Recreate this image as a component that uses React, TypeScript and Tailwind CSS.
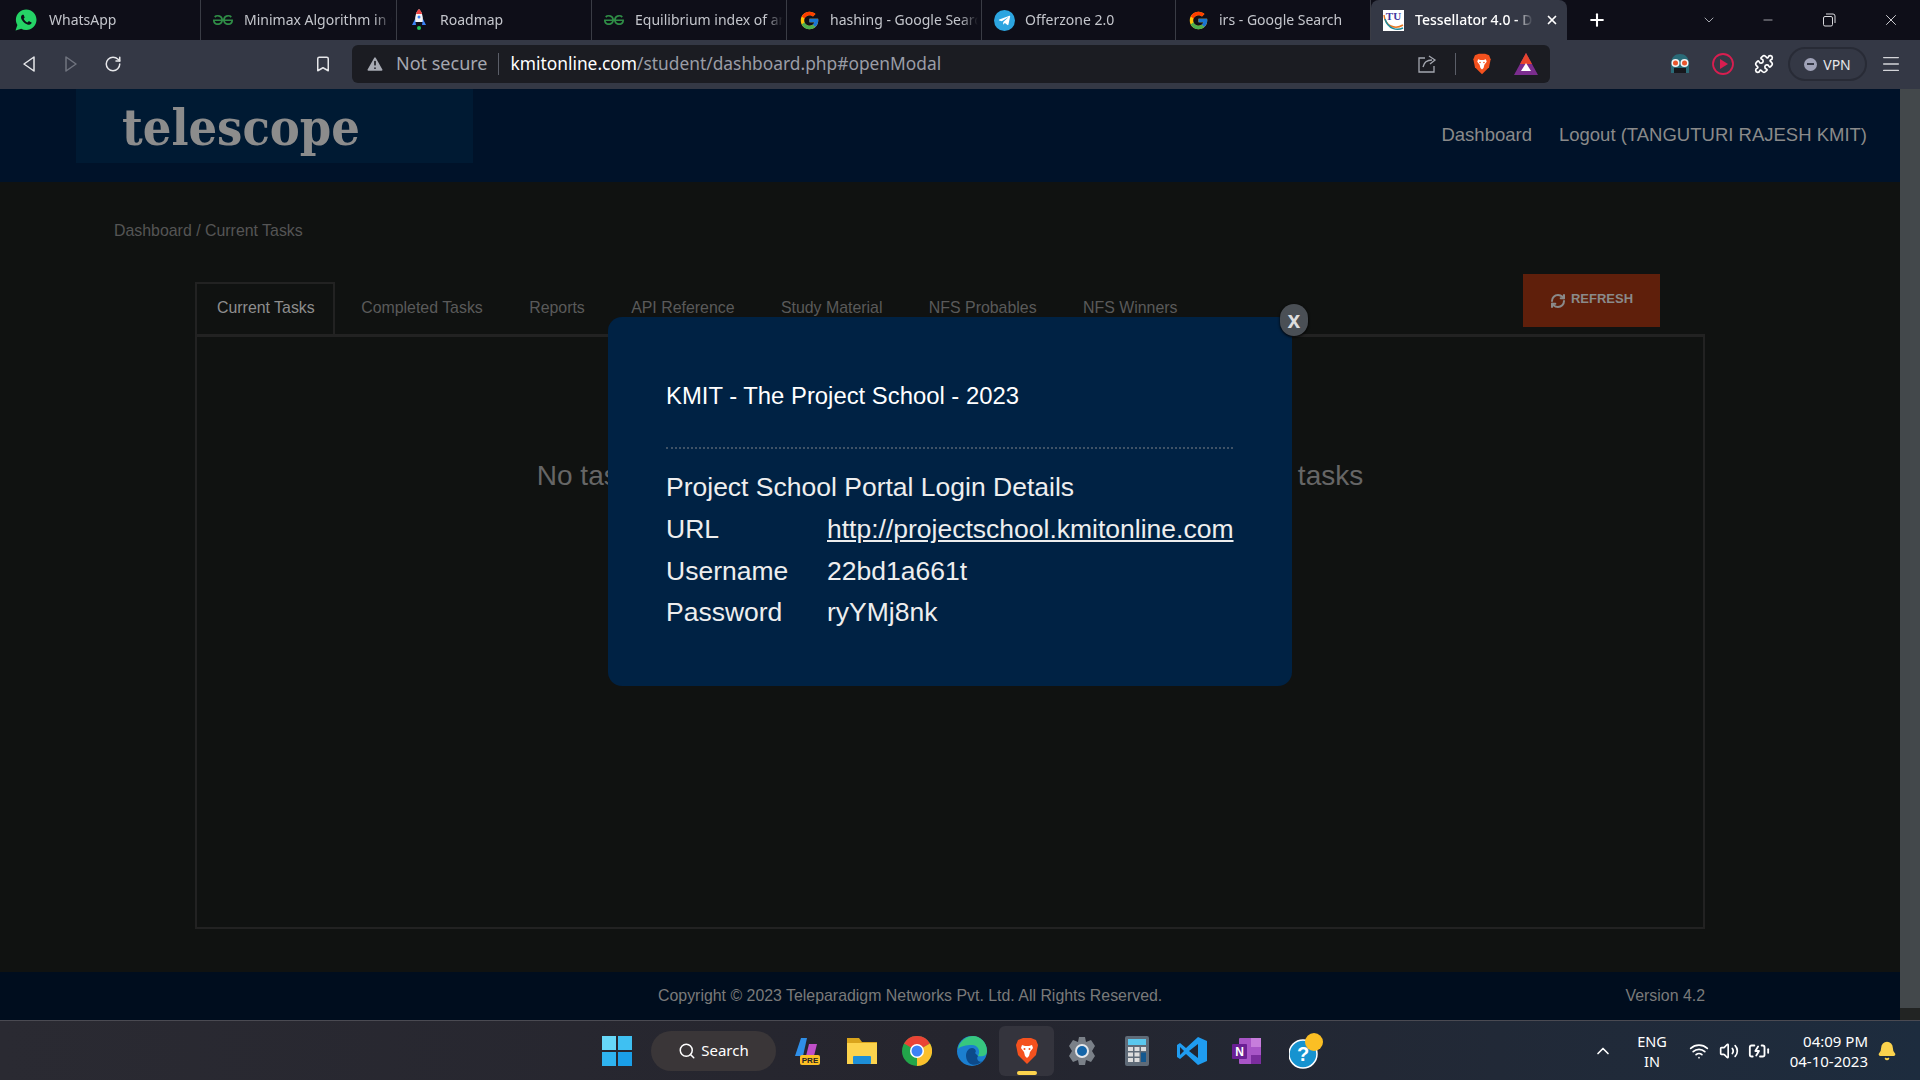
import React from "react";
import { FcGoogle } from "react-icons/fc";
import { IoLogoWhatsapp } from "react-icons/io";
import { FaTelegramPlane } from "react-icons/fa";
import { SiGeeksforgeeks } from "react-icons/si";
import {
  ChevronDown,
  ChevronUp,
  Minus,
  Plus,
  RefreshCw,
  RotateCw,
  Search,
  Volume2,
  Wifi,
  X,
  Bookmark,
  Puzzle,
  Menu,
  Bell,
  BatteryCharging,
  TriangleAlert,
} from "lucide-react";

const BraveIcon = ({ size = 24 }: { size?: number }) => (
  <svg width={size} height={size} viewBox="0 0 24 28">
    <path d="M3 3 L8 1 H16 L21 3 L23 8 L21 18 L12 27 L3 18 L1 8 Z" fill="#f4511e" />
    <path d="M7 8 L10 9 H14 L17 8 L18 11 L15 15 L14 19 L12 21 L10 19 L9 15 L6 11 Z" fill="#fff" />
    <circle cx="9.5" cy="12" r="1" fill="#f4511e" />
    <circle cx="14.5" cy="12" r="1" fill="#f4511e" />
  </svg>
);

const BatIcon = () => (
  <svg width="26" height="24" viewBox="0 0 26 24">
    <path d="M13 1 L25 23 H1 Z" fill="#7b2d8e" />
    <path d="M13 1 L19 12 H7 Z" fill="#e8452c" />
    <path d="M13 11 L18 19 H8 Z" fill="#fff" />
  </svg>
);

const RocketIcon = () => (
  <svg width="16" height="24" viewBox="0 0 16 24">
    <path d="M8 1 C11 4 12 8 12 14 H4 C4 8 5 4 8 1Z" fill="#f3f4f6" />
    <path d="M8 1 C9.5 2.5 10.5 4 11 6 H5 C5.5 4 6.500 2.500 8 1Z" fill="#ef4444" />
    <circle cx="8" cy="9" r="1.500" fill="#3b82f6" />
    <path d="M4 11 L1 17 H5Z M12 11 L15 17 H11Z" fill="#3b82f6" />
    <rect x="6" y="18" width="4" height="4" rx="2" fill="#22c55e" />
  </svg>
);

const TuIcon = () => (
  <div className="w-[21px] h-[21px] bg-white relative overflow-hidden flex items-start justify-center">
    <span className="text-[11px] leading-[13px] font-bold text-[#4338a0] font-['Liberation_Serif',serif]">TU</span>
    <svg className="absolute inset-0" width="21" height="21" viewBox="0 0 21 21" fill="none">
      <path d="M1 5 C2 16 12 20 20 15" stroke="#e87722" strokeWidth="1.500" />
      <path d="M2 9 C5 19 14 21 20 18" stroke="#1b8a9a" strokeWidth="1.500" />
    </svg>
  </div>
);

const GfgIcon = () => <SiGeeksforgeeks size={20} color="#2f8d46" />;

const tabs = [
  { title: "WhatsApp", icon: <IoLogoWhatsapp size={24} color="#25d366" className="-ml-[4px]" />, w: "w-[195px]" },
  { title: "Minimax Algorithm in Game Theory", icon: <GfgIcon />, w: "w-[196px]" },
  { title: "Roadmap", icon: <RocketIcon />, w: "w-[195px]" },
  { title: "Equilibrium index of an array", icon: <GfgIcon />, w: "w-[195px]" },
  { title: "hashing - Google Search", icon: <FcGoogle size={21} />, w: "w-[195px]" },
  {
    title: "Offerzone 2.0",
    icon: (
      <span className="w-[21px] h-[21px] rounded-full bg-[#2ca5e0] flex items-center justify-center">
        <FaTelegramPlane size={13} color="#fff" />
      </span>
    ),
    w: "w-[194px]",
  },
  { title: "irs - Google Search", icon: <FcGoogle size={21} />, w: "w-[195px]" },
];

const BrowserTabs = () => (
  <div className="h-10 bg-[#0e0e18] flex items-center pl-[6px] text-[14px] text-[#c4c6cc]">
    {tabs.map((tab) => (
      <div key={tab.title} className={`${tab.w} h-10 flex items-center relative border-r border-[#3a3c45]`}>
        <span className="w-[42px] pl-[2px] flex justify-center shrink-0">{tab.icon}</span>
        <span className="ml-[1px] mb-[2px] w-[148px] whitespace-nowrap overflow-hidden [mask-image:linear-gradient(to_right,#000_88%,transparent)]">
          {tab.title}
        </span>
      </div>
    ))}
    <div className="w-[196px] h-10 bg-[#343845] rounded-t-lg flex items-center pl-[12px] text-white shrink-0">
      <TuIcon />
      <span className="ml-[11px] mb-[2px] w-[118px] whitespace-nowrap overflow-hidden font-medium [mask-image:linear-gradient(to_right,#000_85%,transparent)]">
        Tessellator 4.0 - Dashboard
      </span>
      <X size={14} strokeWidth={3} className="ml-[12px]" />
    </div>
    <Plus size={20} strokeWidth={2.5} className="ml-[20px] text-white" />
    <ChevronDown size={16} strokeWidth={1.25} className="ml-[94px] text-[#c4c6cc]" />
    <Minus size={14} strokeWidth={1.25} className="ml-[44px] text-[#d8d8dc]" />
    <svg className="ml-[47px] text-[#d8d8dc]" width="14" height="14" viewBox="0 0 14 14" fill="none" stroke="currentColor">
      <rect x="1.500" y="3.500" width="9" height="9.500" rx="1.500" />
      <path d="M4 1 H11 A2 2 0 0 1 13 3 V10" />
    </svg>
    <X size={18} strokeWidth={1.25} className="ml-[46px] text-[#d8d8dc]" />
  </div>
);

const Toolbar = () => (
  <div className="h-[49px] pb-px bg-[#343845] flex items-center font-['Noto_Sans',sans-serif]">
    <div className="w-[352px] flex items-center shrink-0 text-[#e6e7ea]">
      <svg className="ml-[21px]" width="16" height="18" viewBox="0 0 16 18" fill="none" stroke="currentColor" strokeWidth="1.500">
        <path d="M13 2 L3 9 L13 16 Z" strokeLinejoin="round" />
      </svg>
      <svg className="ml-[26px] text-[#70747f]" width="16" height="18" viewBox="0 0 16 18" fill="none" stroke="currentColor" strokeWidth="1.500">
        <path d="M3 2 L13 9 L3 16 Z" strokeLinejoin="round" />
      </svg>
      <RotateCw size={18} className="ml-[25px]" />
      <Bookmark size={18} className="ml-[192px]" />
    </div>
    <div className="w-[1198px] h-[38px] bg-[#1b1c22] rounded-md flex items-center text-[18px] shrink-0">
      <TriangleAlert size={20} fill="#a8abb4" stroke="#1b1c22" className="ml-[13px] text-[#a8abb4]" />
      <span className="ml-[11px] mb-[2px] text-[#a4a7b0]">Not secure</span>
      <span className="mx-[10px] w-px h-[22px] bg-[#5b5e68]" />
      <span className="ml-[2px] mb-[2px] text-[17.35px] text-white">kmitonline.com</span>
      <span className="mb-[2px] text-[17.35px] text-[#9a9da6]">/student/dashboard.php#openModal</span>
      <svg className="ml-auto text-[#a4a7b0]" width="20" height="20" viewBox="0 0 20 20" fill="none" stroke="currentColor" strokeWidth="1.300">
        <path d="M8 4 H2 V18 H17 V12" />
        <path d="M6 13 C7 8 10 6 15 6 M12 2 L18 6 L13 10" />
      </svg>
      <span className="ml-[18px] w-px h-[22px] bg-[#5b5e68]" />
      <span className="ml-[15px] flex"><BraveIcon size={22} /></span>
      <span className="ml-[20px] mr-[11px] flex"><BatIcon /></span>
    </div>
    <svg className="ml-[118px]" width="24" height="24" viewBox="0 0 24 24">
      <path d="M3 12 C3 5 7 2 12 2 C17 2 21 5 21 12 V21 H3 Z" fill="#2a6b78" />
      <rect x="6" y="16" width="12" height="5" fill="#16181d" />
      <circle cx="7.500" cy="11" r="4" fill="#f3f4f6" />
      <circle cx="16.500" cy="11" r="4" fill="#f3f4f6" />
      <circle cx="7.500" cy="11" r="2.500" fill="#e8552c" />
      <circle cx="16.500" cy="11" r="2.500" fill="#e8552c" />
    </svg>
    <svg className="ml-[20px]" width="22" height="22" viewBox="0 0 22 22" fill="none">
      <path d="M11 1 A10 10 0 1 0 21 11" stroke="#d81e50" strokeWidth="1.800" />
      <path d="M21 11 A10 10 0 0 0 11 1" stroke="#d81e50" strokeWidth="1.800" />
      <path d="M8 6 L16 11 L8 16 Z" fill="#d81e50" />
    </svg>
    <Puzzle size={20} className="ml-[20px] text-white" />
    <div className="ml-[14px] w-[79px] h-[34px] rounded-full border-2 border-[#282b36] flex items-center justify-center gap-[6px] text-[14px] text-[#e6e7ea]">
      <span className="w-[13px] h-[13px] rounded-full bg-[#a0a3b8] flex items-center justify-center">
        <span className="w-[7px] h-[2px] bg-[#343845]" />
      </span>
      VPN
    </div>
    <Menu size={22} strokeWidth={1.500} className="ml-[13px] text-[#d4d5d9]" />
  </div>
);

const pageTabs = ["Completed Tasks", "Reports", "API Reference", "Study Material", "NFS Probables", "NFS Winners"];

const PageContent = () => (
  <div className="flex-1 flex flex-col font-['Liberation_Sans',sans-serif]">
    <header className="h-[93px] bg-[#001229] flex items-start shrink-0">
      <div className="ml-[76px] w-[397px] h-[74px] bg-[#001a33] pl-[46px] pt-[7px] text-[50px] leading-[64px] font-bold text-[#8c8c8c] font-['DejaVu_Serif_Condensed','DejaVu_Serif',serif]">
        telescope
      </div>
      <nav className="ml-auto mr-[33px] mt-[35px] flex gap-[27px] text-[18.5px] leading-[22px] text-[#8a8a8a]">
        <span>Dashboard</span>
        <span>Logout (TANGUTURI RAJESH KMIT)</span>
      </nav>
    </header>
    <main className="flex-1 bg-[#101211] pt-[40px] flex flex-col">
      <div className="ml-[114px] text-[15.9px] leading-[18px] text-[#555]">Dashboard / Current Tasks</div>
      <section className="ml-[195px] w-[1510px] mt-[34px]">
        <div className="flex items-start justify-between h-[60px]">
          <div className="flex mt-[8px] text-[15.9px] text-[#5a5a5a]">
            <div className="w-[140px] h-[53px] pb-[4px] pl-[20px] border-2 border-[#222] border-b-0 flex items-center text-[#8e8e8e]">
              Current Tasks
            </div>
            {pageTabs.map((t, i) => (
              <div key={t} className={`h-[53px] pb-[2px] px-[23.2px] flex items-center ${i === 0 ? "ml-[3px]" : ""}`}>
                {t}
              </div>
            ))}
          </div>
          <button className="w-[137px] h-[53px] mr-[45px] bg-[#5f1f0b] text-[#8a8a8a] text-[13px] font-bold flex items-center justify-center gap-[5px]">
            <RefreshCw size={16} strokeWidth={3} />
            <span className="mb-[3px]">REFRESH</span>
          </button>
        </div>
        <div className="h-[595px] border-2 border-t-[3px] border-[#222] pt-[123px] text-center text-[28px] leading-[32px] text-[#666]">
          No tasks are available right now. Please check again for new tasks
        </div>
      </section>
    </main>
    <footer className="h-[48px] bg-[#000d1e] shrink-0 flex items-center text-[15.9px] text-[#7a7a7a]">
      <span className="ml-[658px]">Copyright © 2023 Teleparadigm Networks Pvt. Ltd. All Rights Reserved.</span>
      <span className="ml-auto mr-[195px]">Version 4.2</span>
    </footer>
  </div>
);

const LoginModal = () => (
  <div className="absolute left-[608px] top-[317px] w-[684px] h-[369px] bg-[#002244] rounded-[14px] pt-[65px] px-[58px] text-white font-['Liberation_Sans',sans-serif]">
    <button className="absolute -right-[16px] -top-[13px] w-[28px] h-[32px] rounded-full bg-[#4a4f55] shadow-[0_1px_3px_#000] text-[23px] leading-[28px] font-bold text-[#ddd]">
      x
    </button>
    <h2 className="text-[23.85px] leading-[28px]">KMIT - The Project School - 2023</h2>
    <div className="mt-[37px] border-t-2 border-dotted border-[#3f5266] w-[567px]" />
    <div className="mt-[18px] text-[26.5px] leading-[41.8px] text-[#eee]">
      <div>Project School Portal Login Details</div>
      <div className="grid grid-cols-[161px_1fr]">
        <span>URL</span>
        <a className="underline" href="#">http://projectschool.kmitonline.com</a>
        <span>Username</span>
        <span>22bd1a661t</span>
        <span>Password</span>
        <span>ryYMj8nk</span>
      </div>
    </div>
  </div>
);

const StartIcon = () => (
  <div className="grid grid-cols-2 gap-[2px] w-[30px] h-[30px]">
    <span className="bg-[#67d8f8]" />
    <span className="bg-[#3fc0f2]" />
    <span className="bg-[#2fb4f0]" />
    <span className="bg-[#1a9fe8]" />
  </div>
);

const taskbarIcons = [
  <svg key="copilot" width="30" height="30" viewBox="0 0 30 30">
    <path d="M9 2 H15 L11 20 H3 Z" fill="#2f8fe8" />
    <path d="M17 8 H25 L22 20 H14 Z" fill="#c04fc8" />
    <rect x="8" y="19" width="20" height="10" rx="2" fill="#fbbf24" />
    <text x="18" y="27" fontSize="8" fontWeight="700" textAnchor="middle" fill="#222" fontFamily="Liberation Sans">PRE</text>
  </svg>,
  <svg key="folder" width="30" height="30" viewBox="0 0 30 30">
    <path d="M0 2 H12 L15 6 H30 V28 H0 Z" fill="#d9a41c" />
    <rect y="7" width="30" height="21" fill="#fcd34d" />
    <rect x="6" y="20" width="18" height="8" rx="1" fill="#1d8fd8" />
  </svg>,
  <svg key="chrome" width="30" height="30" viewBox="0 0 30 30">
    <circle cx="15" cy="15" r="15" fill="#22a54a" />
    <path d="M15 15 L2 7.500 A15 15 0 0 1 28 7.500 Z" fill="#ea4335" />
    <path d="M15 15 L28 7.500 A15 15 0 0 1 15 30 Z" fill="#fbc02d" />
    <circle cx="15" cy="15" r="7" fill="#fff" />
    <circle cx="15" cy="15" r="5.500" fill="#3b82f6" />
  </svg>,
  <svg key="edge" width="30" height="30" viewBox="0 0 30 30">
    <circle cx="15" cy="15" r="15" fill="#1b7fd0" />
    <path d="M1 13 C3 4 10 0 16 0 C24 0 30 7 30 15 C30 20 25 21 21 20 C24 15 21 9 15 9 C9 9 4 10 1 13Z" fill="#37c77f" />
    <path d="M21 20 C18 24 24 28 26 24 C22 30 10 32 9 20 C9 15 12 12 15 12 C18 12 20 15 18 17 Z" fill="#0c4a8a" />
  </svg>,
  <BraveIcon key="brave" size={28} />,
  <svg key="settings" width="30" height="30" viewBox="0 0 30 30">
    <path d="M12 1 H18 L19 6 L24 4 L28 10 L25 15 L28 20 L24 26 L19 24 L18 29 H12 L11 24 L6 26 L2 20 L5 15 L2 10 L6 4 L11 6 Z" fill="#7a8088" />
    <circle cx="15" cy="15" r="7" fill="#e5e7eb" />
    <circle cx="15" cy="15" r="5" fill="#1565a8" />
  </svg>,
  <svg key="calc" width="24" height="30" viewBox="0 0 24 30">
    <rect width="24" height="30" rx="2" fill="#5f6b78" />
    <rect x="3" y="3" width="18" height="6" fill="#5ac8ee" />
    <rect x="3" y="11" width="5" height="4" fill="#ddd" />
    <rect x="9.500" y="11" width="5" height="4" fill="#ddd" />
    <rect x="16" y="11" width="5" height="4" fill="#ddd" />
    <rect x="3" y="16.500" width="5" height="4" fill="#ddd" />
    <rect x="9.500" y="16.500" width="5" height="4" fill="#ddd" />
    <rect x="3" y="22" width="5" height="4" fill="#ddd" />
    <rect x="9.500" y="22" width="5" height="4" fill="#ddd" />
    <rect x="16" y="16.500" width="5" height="9.500" fill="#14588f" />
  </svg>,
  <svg key="vscode" width="30" height="30" viewBox="0 0 30 30">
    <path d="M21 1 L30 5 V25 L21 29 L9 18 L3 23 L0 21 V9 L3 7 L9 12 Z" fill="#1f9cf0" />
    <path d="M21 8 L12 15 L21 22 Z" fill="#202532" />
    <path d="M3 11 L7 15 L3 19 Z" fill="#202532" />
  </svg>,
  <svg key="onenote" width="30" height="30" viewBox="0 0 30 30">
    <rect x="7" y="2" width="22" height="26" rx="1" fill="#a855c7" />
    <rect x="19" y="2" width="10" height="9" fill="#c77ddc" />
    <rect x="19" y="19" width="10" height="9" fill="#7b2d9e" />
    <rect x="0" y="8" width="15" height="15" rx="1" fill="#6a1f94" />
    <text x="7.500" y="20" fontSize="12" fontWeight="700" textAnchor="middle" fill="#fff" fontFamily="Liberation Sans">N</text>
  </svg>,
  <svg key="help" className="ml-[8px]" width="34" height="36" viewBox="0 0 34 36">
    <circle cx="14" cy="21" r="14" fill="#1693d0" stroke="#fff" strokeWidth="1.500" />
    <text x="14" y="28" fontSize="20" fontWeight="700" textAnchor="middle" fill="#fff" fontFamily="Liberation Sans">?</text>
    <circle cx="25" cy="9" r="9" fill="#fbbf24" />
  </svg>,
];

const Taskbar = () => (
  <div className="h-[60px] border-t border-[#4a4a52] bg-gradient-to-r from-[#2a2a32] via-[#25252e] to-[#1d2c3e] flex items-center font-['Noto_Sans',sans-serif] text-white">
    <div className="ml-[602px]"><StartIcon /></div>
    <div className="ml-[19px] w-[125px] h-[40px] rounded-full bg-[#3a3638] flex items-center justify-center gap-[5px] text-[15px]">
      <Search size={18} />
      Search
    </div>
    <div className="ml-[3px] flex items-center">
      {taskbarIcons.map((icon, i) => (
        <div
          key={i}
          className={`w-[55px] h-[50px] flex items-center justify-center relative ${i === 4 ? "bg-[#34343d] rounded-md" : ""}`}
        >
          {icon}
          {i === 4 && <span className="absolute bottom-[1px] w-[20px] h-[4px] rounded-full bg-[#fcd34d]" />}
        </div>
      ))}
    </div>
    <ChevronUp size={20} className="ml-[264px]" />
    <div className="ml-[19px] w-[40px] text-center text-[14.5px] leading-[20px]">
      ENG
      <br />
      IN
    </div>
    <Wifi size={20} className="ml-[17px]" />
    <Volume2 size={20} className="ml-[10px]" />
    <BatteryCharging size={22} className="ml-[9px]" />
    <div className="ml-[18px] w-[80px] text-right text-[15px] leading-[20px] whitespace-nowrap">
      04:09 PM
      <br />
      04-10-2023
    </div>
    <Bell size={20} fill="#fcd34d" stroke="#fcd34d" className="ml-[9px]" />
  </div>
);

export default function App() {
  return (
    <div className="relative w-[1920px] h-[1080px] overflow-hidden flex flex-col bg-[#101211] font-['Noto_Sans',sans-serif]">
      <BrowserTabs />
      <Toolbar />
      <div className="flex-1 flex min-h-0">
        <PageContent />
        <div className="w-5 flex flex-col bg-[#222423]">
          <div className="h-[919px] bg-[#43484b]" />
        </div>
      </div>
      <Taskbar />
      <LoginModal />
    </div>
  );
}
